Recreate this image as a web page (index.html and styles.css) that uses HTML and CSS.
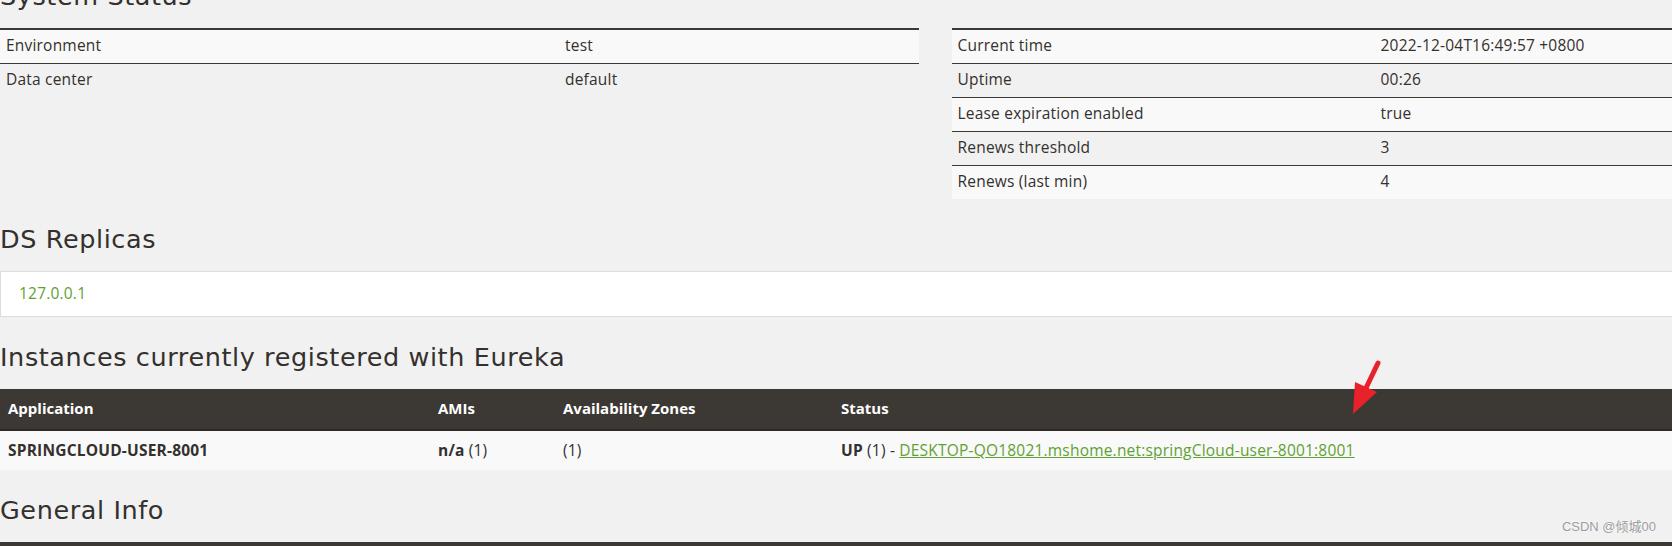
FILE: index.html
```html
<!DOCTYPE html>
<html lang="en">
<head>
    <meta charset="UTF-8">
    <meta name="viewport" content="width=device-width, initial-scale=1.0">
    <title>Eureka</title>
    <link rel="stylesheet" href="styles.css">
</head>
<body>
    <div class="page">
        <h2 class="section-title first">System Status</h2>
        <div class="status-row">
            <table class="info-table env-table">
                <tbody>
                    <tr><td class="label">Environment</td><td>test</td></tr>
                    <tr><td class="label">Data center</td><td>default</td></tr>
                </tbody>
            </table>
            <table class="info-table time-table">
                <tbody>
                    <tr><td class="label">Current time</td><td>2022-12-04T16:49:57 +0800</td></tr>
                    <tr><td class="label">Uptime</td><td>00:26</td></tr>
                    <tr><td class="label">Lease expiration enabled</td><td>true</td></tr>
                    <tr><td class="label">Renews threshold</td><td>3</td></tr>
                    <tr><td class="label">Renews (last min)</td><td>4</td></tr>
                </tbody>
            </table>
        </div>

        <h2 class="section-title">DS Replicas</h2>
        <ul class="replicas">
            <li><a href="#">127.0.0.1</a></li>
        </ul>

        <h2 class="section-title">Instances currently registered with Eureka</h2>
        <table class="grid-table instances">
            <thead>
                <tr>
                    <th class="col-app">Application</th>
                    <th class="col-ami">AMIs</th>
                    <th class="col-zone">Availability Zones</th>
                    <th>Status</th>
                </tr>
            </thead>
            <tbody>
                <tr>
                    <td class="app-name">SPRINGCLOUD-USER-8001</td>
                    <td><b>n/a</b> (1)</td>
                    <td>(1)</td>
                    <td><b>UP</b> (1) - <a href="#">DESKTOP-QO18021.mshome.net:springCloud-user-8001:8001</a></td>
                </tr>
            </tbody>
        </table>

        <h2 class="section-title">General Info</h2>
        <table class="grid-table">
            <thead>
                <tr><th class="col-app">Name</th><th>Value</th></tr>
            </thead>
        </table>
    </div>

    <!-- red annotation arrow drawn over the page -->
    <svg class="arrow" width="50" height="65" viewBox="0 0 50 65">
        <line x1="38" y1="8" x2="26" y2="33" stroke="#e8212b" stroke-width="5" stroke-linecap="round"/>
        <polygon points="15,27 37,37 13,59" fill="#e8212b"/>
    </svg>

    <div class="watermark">CSDN @倾城00</div>
</body>
</html>
```

FILE: styles.css
```css
body {
    margin: 0;
    background-color: #f1f1f1;
    color: #34302d;
    font-family: "Open Sans", "Noto Sans", sans-serif;
    font-size: 15px;
    line-height: 20px;
    overflow: hidden;
}
.page {
    width: 1870px;
    margin-top: -19px; /* page is scrolled a little */
}
.section-title {
    font-family: "DejaVu Sans", sans-serif;
    font-size: 25.5px;
    font-weight: normal;
    letter-spacing: 0.6px;
    line-height: 30px;
    margin: 25px 0 17px 0;
}
.section-title.first {
    margin-top: 0;
}
a {
    color: #5fa134;
}

/* system status */
.status-row {
    display: grid;
    grid-template-columns: 1fr 1fr;
    column-gap: 33px;
    align-items: start;
}
.info-table {
    width: 100%;
    border-collapse: separate;
    border-spacing: 0;
}
.info-table td {
    border-top: 1px solid #3c3834;
    padding: 5px 5px 8px 6px;
    font-size: 15.5px;
    letter-spacing: 0.2px;
}
.info-table tr:first-child td {
    border-top: 2px solid #3c3834;
}
.info-table tr:nth-child(odd) td {
    background-color: #f9f9f9;
}
.env-table .label {
    width: 548px;
}
.time-table .label {
    width: 412px;
}

/* replicas */
.replicas {
    list-style: none;
    margin: 0;
    padding: 11px 18px 13px 18px;
    background: #fff;
    border: 1px solid #ddd;
    font-size: 15.5px;
    letter-spacing: 0.2px;
}
.replicas a {
    text-decoration: none;
}

/* instances */
.grid-table {
    width: 100%;
    table-layout: fixed;
    border-collapse: separate;
    border-spacing: 0;
}
.grid-table th {
    background-color: #3c3834;
    color: #fff;
    font-weight: bold;
    text-align: left;
    padding: 9px 8px 11px 8px;
    border-bottom: 2px solid #2e2a27;
}
.grid-table td {
    background-color: #f9f9f9;
    padding: 9px 8px 10px 8px;
    font-size: 15.5px;
    letter-spacing: 0.2px;
}
.col-app {
    width: 414px;
}
.col-ami {
    width: 109px;
}
.col-zone {
    width: 262px;
}
.app-name {
    font-weight: bold;
}

/* screenshot overlays */
.arrow {
    position: absolute;
    left: 1340px;
    top: 355px;
}
.watermark {
    position: absolute;
    right: 16px;
    bottom: 9px;
    font-family: "Liberation Sans", "Noto Sans CJK SC", sans-serif;
    font-size: 13px;
    color: #9d9d9d;
    text-shadow: 0 0 2px #fff;
}
```
